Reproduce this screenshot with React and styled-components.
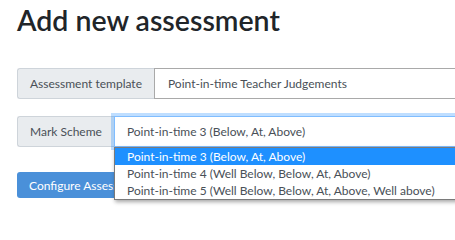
import React from 'react'
import styled, { createGlobalStyle } from 'styled-components'

const GlobalStyle = createGlobalStyle`
  html, body {
    margin: 0;
    padding: 0;
    background: #fff;
    overflow: hidden;
  }
  body {
    font-family: Lato, "Open Sans", sans-serif;
    color: #212529;
  }
`

const Page = styled.div`
  width: 455px;
  height: 220px;
  padding: 0 0 0 17px;
  box-sizing: border-box;
  overflow: hidden;
`

const Title = styled.h2`
  margin: 0;
  padding-top: 2px;
  font-size: 28.5px;
  font-weight: 600;
  line-height: 36px;
  color: #212529;
`

const InputGroup = styled.div`
  display: flex;
  height: 31px;
  margin-top: ${p => p.$top}px;
  position: relative;
`

const Addon = styled.div`
  display: flex;
  align-items: center;
  padding: 0 12px;
  background: #e9ecef;
  border: 1px solid #ced4da;
  border-right: none;
  border-radius: 3px 0 0 3px;
  font-size: 12px;
  color: #495057;
  white-space: nowrap;
`

const Field = styled.div`
  flex: 1;
  display: flex;
  align-items: center;
  padding: 0 ${p => (p.$focused ? 12 : 13)}px;
  border: 1px solid ${p => (p.$focused ? '#80bdff' : '#a9a9a9')};
  border-right: none;
  font-size: 12px;
  color: #495057;
  white-space: nowrap;
  box-shadow: ${p => (p.$focused ? '0 0 0 3px rgba(0, 123, 255, 0.25)' : 'none')};
`

const Button = styled.button`
  display: block;
  margin-top: 25px;
  height: 26px;
  padding: 0 12px;
  border: none;
  border-radius: 3px;
  background: #4a90d9;
  color: #fff;
  font-family: inherit;
  font-size: 12px;
  white-space: nowrap;
`

const Menu = styled.ul`
  position: absolute;
  top: 31px;
  left: 97px;
  width: 360px;
  margin: 0;
  padding: 0;
  list-style: none;
  background: #fff;
  border: 1px solid #7a7a7a;
  box-shadow: 1px 2px 4px rgba(0, 0, 0, 0.35);
  z-index: 2;
`

const Option = styled.li`
  height: 17px;
  line-height: 17px;
  padding: 0 12px;
  font-size: 12px;
  white-space: nowrap;
  background: ${p => (p.$active ? '#1e90ff' : '#fff')};
  color: ${p => (p.$active ? '#fff' : '#495057')};
`

const options = [
  'Point-in-time 3 (Below, At, Above)',
  'Point-in-time 4 (Well Below, Below, At, Above)',
  'Point-in-time 5 (Well Below, Below, At, Above, Well above)',
]

export default function App() {
  return (
    <>
      <GlobalStyle />
      <Page>
        <Title>Add new assessment</Title>
        <InputGroup $top={30}>
          <Addon>Assessment template</Addon>
          <Field>Point-in-time Teacher Judgements</Field>
        </InputGroup>
        <InputGroup $top={17}>
          <Addon>Mark Scheme</Addon>
          <Field $focused>{options[0]}</Field>
          <Menu>
            {options.map((o, i) => (
              <Option key={o} $active={i === 0}>{o}</Option>
            ))}
          </Menu>
        </InputGroup>
        <Button>Configure Assessment</Button>
      </Page>
    </>
  )
}
